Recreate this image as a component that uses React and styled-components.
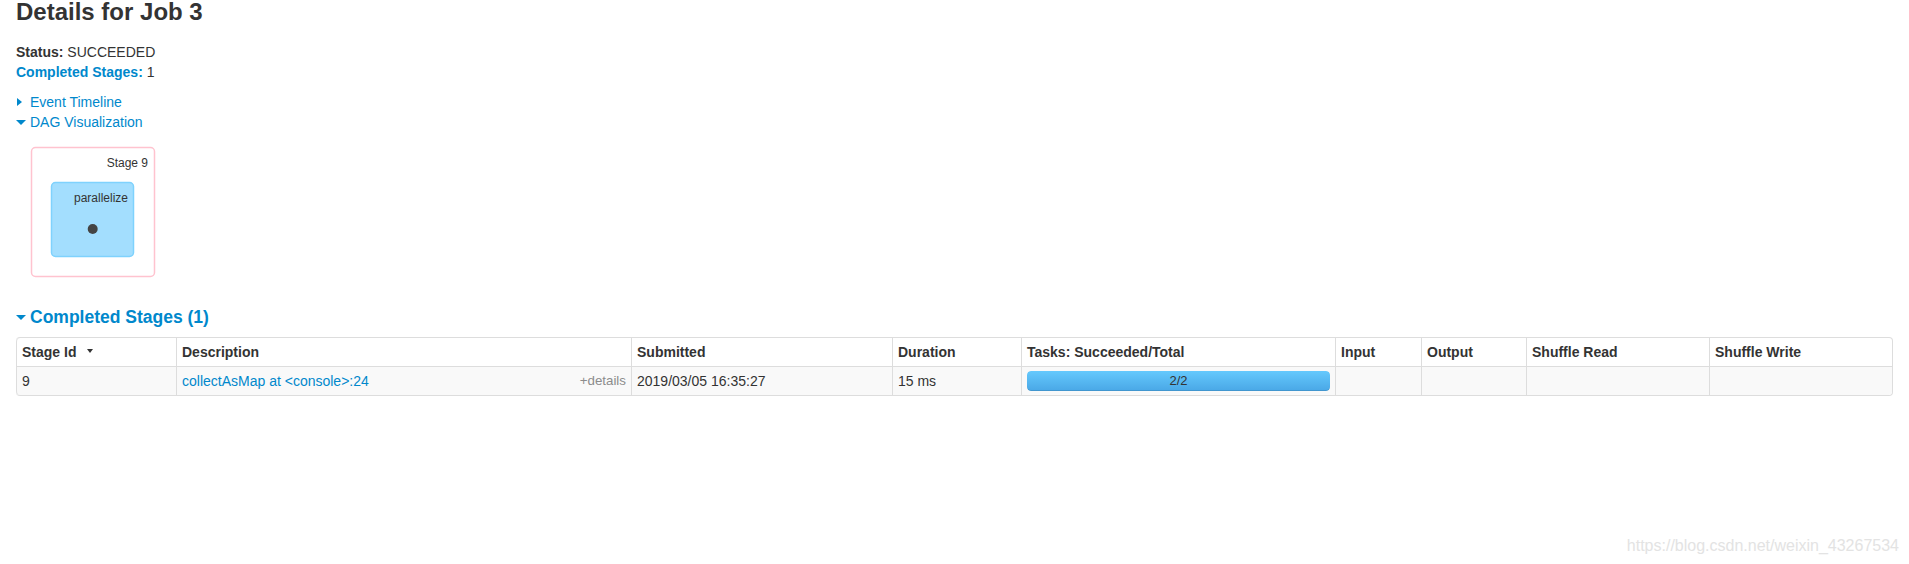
import React from "react";
import styled, { createGlobalStyle } from "styled-components";

const colors = {
  text: "#333",
  link: "#0088cc",
  border: "#ddd",
  stripe: "#f9f9f9",
  muted: "#8c8c8c",
};

const GlobalStyle = createGlobalStyle`
  html, body {
    margin: 0;
    padding: 0;
    background: #fff;
  }
  body {
    font-family: "Liberation Sans", Arial, Helvetica, sans-serif;
    font-size: 14px;
    line-height: 20px;
    color: ${colors.text};
  }
`;

const Page = styled.div`
  position: relative;
  min-height: 564px;
  box-sizing: border-box;
  padding: 0 16px;
`;

const Title = styled.h3`
  margin: 0;
  font-size: 24px;
  line-height: 24px;
  font-weight: bold;
`;

const Summary = styled.ul`
  list-style: none;
  margin: 18px 0 0;
  padding: 0;
`;

const Link = styled.a`
  color: ${colors.link};
  text-decoration: none;
  cursor: pointer;
`;

const Toggles = styled.div`
  margin-top: 10px;
`;

const Toggle = styled.div`
  display: flex;
  align-items: center;
  color: ${colors.link};
  cursor: pointer;
`;

const Arrow = styled.span`
  display: inline-flex;
  align-items: center;
  width: 14px;
  flex: none;
  &::before {
    content: "";
    width: 0;
    height: 0;
    ${(p) =>
      p.$open
        ? `border-left: 5px solid transparent;
           border-right: 5px solid transparent;
           border-top: 5px solid ${colors.link};`
        : `margin-left: 1px;
           border-top: 4px solid transparent;
           border-bottom: 4px solid transparent;
           border-left: 5px solid ${colors.link};`}
  }
`;

const DagSvg = styled.svg`
  display: block;
  margin-top: 5px;
  font-family: "Liberation Sans", Arial, sans-serif;
  font-size: 12px;
`;

const SectionTitle = styled.h4`
  display: flex;
  align-items: center;
  margin: 10px 0 10px;
  font-size: 17.5px;
  line-height: 20px;
  font-weight: bold;
  color: ${colors.link};
  cursor: pointer;
`;

const Table = styled.table`
  width: 100%;
  table-layout: fixed;
  border-collapse: separate;
  border-spacing: 0;
  border: 1px solid ${colors.border};
  border-left: 0;
  border-radius: 4px;
`;

const HeadCell = styled.th`
  box-sizing: border-box;
  padding: 4px 5px;
  text-align: left;
  font-weight: bold;
  line-height: 20px;
  border-left: 1px solid ${colors.border};
  white-space: nowrap;
  &:first-child {
    border-top-left-radius: 4px;
  }
  &:last-child {
    border-top-right-radius: 4px;
  }
`;

const Cell = styled.td`
  box-sizing: border-box;
  padding: 4px 5px;
  line-height: 20px;
  vertical-align: top;
  background: ${colors.stripe};
  border-left: 1px solid ${colors.border};
  border-top: 1px solid ${colors.border};
  white-space: nowrap;
  &:first-child {
    border-bottom-left-radius: 4px;
  }
  &:last-child {
    border-bottom-right-radius: 4px;
  }
`;

const SortArrow = styled.span`
  display: inline-block;
  margin-left: 11px;
  vertical-align: middle;
  width: 0;
  height: 0;
  border-left: 3px solid transparent;
  border-right: 3px solid transparent;
  border-top: 4px solid ${colors.text};
  position: relative;
  top: -2px;
`;

const Details = styled.span`
  float: right;
  font-size: 13.33px;
  color: ${colors.muted};
  cursor: pointer;
`;

const Progress = styled.div`
  height: 20px;
  border-radius: 4px;
  background: #f5f5f5;
  overflow: hidden;
`;

const ProgressBar = styled.div`
  height: 100%;
  border-radius: 4px;
  background-image: linear-gradient(to bottom, #65c9fd, #49a7e6);
  box-shadow: inset 0 -1px 0 rgba(0, 0, 0, 0.1);
  display: flex;
  align-items: center;
  justify-content: center;
  font-size: 13px;
  color: ${colors.text};
`;

const Watermark = styled.div`
  position: absolute;
  right: 10px;
  bottom: 8px;
  font-size: 16px;
  line-height: 20px;
  color: #e3e3e3;
`;

const columns = [
  { label: "Stage Id", width: 160, sort: true },
  { label: "Description", width: 455 },
  { label: "Submitted", width: 261 },
  { label: "Duration", width: 129 },
  { label: "Tasks: Succeeded/Total", width: 314 },
  { label: "Input", width: 86 },
  { label: "Output", width: 105 },
  { label: "Shuffle Read", width: 183 },
  { label: "Shuffle Write", width: 183 },
];

const stage = {
  id: 9,
  description: "collectAsMap at <console>:24",
  submitted: "2019/03/05 16:35:27",
  duration: "15 ms",
  succeeded: 2,
  total: 2,
};

function DagViz() {
  return (
    <DagSvg width="150" height="160" viewBox="0 0 150 160">
      <rect
        x="15.5"
        y="10.5"
        width="123"
        height="129"
        rx="4"
        fill="#fff"
        stroke="#ffc3cf"
        strokeWidth="1.5"
      />
      <text x="132" y="30" textAnchor="end" fill="#333">
        Stage 9
      </text>
      <rect
        x="35.5"
        y="45.5"
        width="82"
        height="74"
        rx="4"
        fill="#a3defe"
        stroke="#7fd2fd"
        strokeWidth="1.5"
      />
      <text x="112" y="65" textAnchor="end" fill="#333">
        parallelize
      </text>
      <circle cx="76.7" cy="92" r="5" fill="#444" />
    </DagSvg>
  );
}

export default function App() {
  const pct = (stage.succeeded / stage.total) * 100;
  return (
    <Page>
      <GlobalStyle />
      <Title>Details for Job 3</Title>
      <Summary>
        <li>
          <strong>Status:</strong> SUCCEEDED
        </li>
        <li>
          <Link>
            <strong>Completed Stages:</strong>
          </Link>{" "}
          1
        </li>
      </Summary>
      <Toggles>
        <Toggle>
          <Arrow />
          Event Timeline
        </Toggle>
        <Toggle>
          <Arrow $open />
          DAG Visualization
        </Toggle>
      </Toggles>
      <DagViz />
      <SectionTitle>
        <Arrow $open />
        Completed Stages (1)
      </SectionTitle>
      <Table>
        <colgroup>
          {columns.map((c) => (
            <col key={c.label} style={{ width: c.width }} />
          ))}
        </colgroup>
        <thead>
          <tr>
            {columns.map((c) => (
              <HeadCell key={c.label}>
                {c.label}
                {c.sort && <SortArrow />}
              </HeadCell>
            ))}
          </tr>
        </thead>
        <tbody>
          <tr>
            <Cell>{stage.id}</Cell>
            <Cell>
              <Link>{stage.description}</Link>
              <Details>+details</Details>
            </Cell>
            <Cell>{stage.submitted}</Cell>
            <Cell>{stage.duration}</Cell>
            <Cell>
              <Progress>
                <ProgressBar style={{ width: `${pct}%` }}>
                  {stage.succeeded}/{stage.total}
                </ProgressBar>
              </Progress>
            </Cell>
            <Cell />
            <Cell />
            <Cell />
            <Cell />
          </tr>
        </tbody>
      </Table>
      <Watermark>https://blog.csdn.net/weixin_43267534</Watermark>
    </Page>
  );
}
